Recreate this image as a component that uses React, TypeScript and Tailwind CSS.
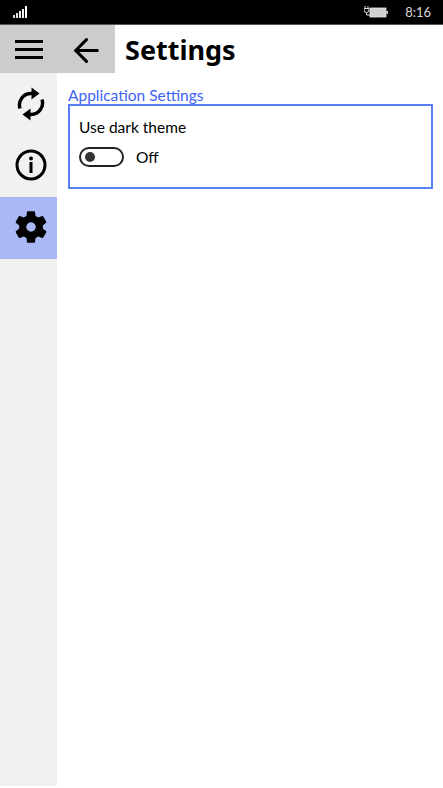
import { ArrowLeft } from 'lucide-react';

const font = { fontFamily: '"Noto Sans", "Open Sans", sans-serif' };
const bodyFont = { fontFamily: 'Lato, "Noto Sans", sans-serif' };

// 상태바 아이콘
function SignalIcon() {
  return (
    <svg width="16" height="13" viewBox="0 0 16 13" className="block">
      <rect x="0" y="9" width="2" height="3" fill="#d8d8d8" />
      <rect x="3" y="7" width="2" height="5" fill="#e0e0e0" />
      <rect x="6" y="5" width="2" height="7" fill="#e8e8e8" />
      <rect x="9" y="3" width="2" height="9" fill="#f0f0f0" />
      <rect x="12" y="0" width="2" height="12" fill="#ffffff" />
    </svg>
  );
}

function BatteryIcon() {
  return (
    <svg width="25" height="14" viewBox="0 0 25 14" className="block">
      <path d="M1 1v2.5M4 1v2.5M0 3.5h5v1.5a2.5 2.5 0 0 1-5 0zM2.5 7.5V10H6" stroke="#ddd" strokeWidth="1" fill="none" />
      <rect x="6" y="3" width="16" height="9" fill="#cfcfcf" stroke="#e8e8e8" strokeWidth="0.8" />
      <rect x="22.5" y="6" width="1.5" height="3" fill="#ddd" />
    </svg>
  );
}

function HamburgerIcon() {
  return (
    <svg width="30" height="20" viewBox="0 0 30 20" className="block">
      <rect x="1" y="0" width="28" height="3" fill="#000" />
      <rect x="1" y="8" width="28" height="3" fill="#000" />
      <rect x="1" y="16" width="28" height="3" fill="#000" />
    </svg>
  );
}

function SyncIcon() {
  return (
    <svg width="28" height="34" viewBox="0 0 28 34" fill="none" className="block">
      <path d="M3 21.5A11.5 11.5 0 0 1 14 6.5h3" stroke="#000" strokeWidth="3.4" />
      <path d="M14.5 0.5 L22.5 6.5 L14.5 12.5 z" fill="#000" />
      <path d="M25 12.5A11.5 11.5 0 0 1 14 27.5h-3" stroke="#000" strokeWidth="3.4" />
      <path d="M13.5 21.5 L5.5 27.5 L13.5 33.5 z" fill="#000" />
    </svg>
  );
}

function InfoIcon() {
  return (
    <svg width="32" height="32" viewBox="0 0 32 32" fill="none" className="block">
      <circle cx="16" cy="16" r="14" stroke="#000" strokeWidth="3" />
      <circle cx="16" cy="9.5" r="2" fill="#000" />
      <rect x="14.5" y="13" width="3" height="11" fill="#000" />
    </svg>
  );
}

function GearIcon() {
  return (
    <svg width="38" height="38" viewBox="0 0 24 24" className="block">
      <path
        fill="#000"
        fillRule="evenodd"
        d="M19.43 12.98c.04-.32.07-.64.07-.98s-.03-.66-.07-.98l2.11-1.65c.19-.15.24-.42.12-.64l-2-3.46c-.12-.22-.39-.3-.61-.22l-2.49 1c-.52-.4-1.08-.73-1.69-.98l-.38-2.65A.488.488 0 0 0 14 2h-4c-.25 0-.46.18-.49.42l-.38 2.65c-.61.25-1.17.59-1.69.98l-2.49-1c-.23-.09-.49 0-.61.22l-2 3.46c-.13.22-.07.49.12.64l2.11 1.65c-.04.32-.07.65-.07.98s.03.66.07.98l-2.11 1.65c-.19.15-.24.42-.12.64l2 3.46c.12.22.39.3.61.22l2.49-1c.52.4 1.08.73 1.69.98l.38 2.65c.03.24.24.42.49.42h4c.25 0 .46-.18.49-.42l.38-2.65c.61-.25 1.17-.59 1.69-.98l2.49 1c.23.09.49 0 .61-.22l2-3.46c.12-.22.07-.49-.12-.64l-2.11-1.65zM12 15a3 3 0 1 1 0-6 3 3 0 0 1 0 6z"
      />
    </svg>
  );
}

export default function App() {
  return (
    <div className="flex h-[788px] w-[443px] flex-col overflow-hidden bg-white" style={font}>
      {/* 상태바 */}
      <div className="flex h-[25px] shrink-0 items-center justify-between border-b border-[#555555] bg-black pl-[13px] pr-[12px]">
        <SignalIcon />
        <div className="flex items-center gap-[16px]">
          <BatteryIcon />
          <span className="text-[13px] leading-none text-[#d8d8d8]" style={bodyFont}>8:16</span>
        </div>
      </div>

      {/* 헤더 */}
      <div className="flex h-[48px] shrink-0 items-center">
        <div className="flex h-full w-[115px] items-center bg-[#cccccc] pt-[2px]">
          <div className="flex w-[58px] justify-center">
            <HamburgerIcon />
          </div>
          <div className="flex w-[57px] justify-center">
            <ArrowLeft size={37} strokeWidth={2} color="#000" />
          </div>
        </div>
        <h1 className="ml-[10px] text-[27px] font-bold leading-none text-black">Settings</h1>
      </div>

      <div className="flex min-h-0 flex-1 pb-[2px]">
        {/* 사이드바 */}
        <div className="w-[57px] shrink-0 bg-[#f1f1f1]">
          <div className="flex h-[62px] items-center justify-center pl-[4px]">
            <SyncIcon />
          </div>
          <div className="flex h-[62px] items-center justify-center pb-[2px] pl-[4px]">
            <InfoIcon />
          </div>
          <div className="flex h-[62px] items-center justify-center bg-[#a9b9f7] pb-[2px] pl-[4px]">
            <GearIcon />
          </div>
        </div>

        {/* 본문 */}
        <div className="flex-1 pl-[11px] pr-[10px] pt-[14px]" style={bodyFont}>
          <div className="pb-[1px] text-[15.5px] leading-[16px] text-[#3e63f6]">Application Settings</div>
          <div className="h-[85px] border-2 border-[#5a7df8] px-[9px] pt-[11px]">
            <div className="text-[15.5px] leading-[20px] text-black">Use dark theme</div>
            <div className="mt-[10px] flex items-center gap-[12px]">
              <div className="flex h-[20px] w-[45px] items-center rounded-full border-2 border-[#222222] pl-[4px]">
                <div className="size-[10px] rounded-full bg-[#333333]" />
              </div>
              <span className="text-[15.5px] leading-[20px] text-black">Off</span>
            </div>
          </div>
        </div>
      </div>
    </div>
  );
}
